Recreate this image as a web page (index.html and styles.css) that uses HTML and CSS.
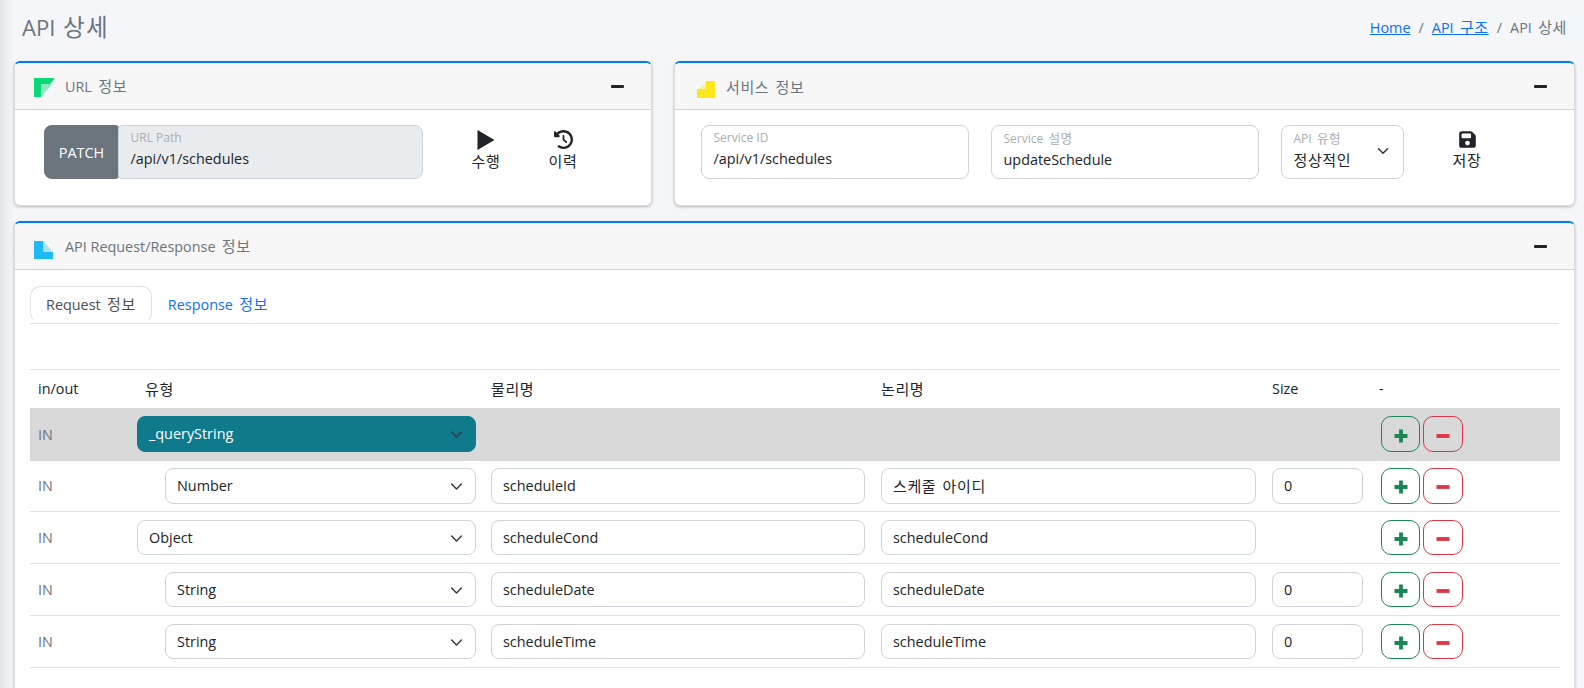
FILE: index.html
```html
<!DOCTYPE html>
<html lang="ko">
<head>
<meta charset="utf-8">
<title>API 상세</title>
<link rel="stylesheet" href="styles.css">
</head>
<body>
<div class="page">
  <header class="page-head">
    <h1 class="page-title">API<span class="ko"> 상세</span></h1>
    <nav class="crumbs"><a href="#">Home</a><span class="sep">/</span><a href="#">API<span class="ko"> 구조</span></a><span class="sep">/</span><span>API<span class="ko"> 상세</span></span></nav>
  </header>

  <div class="top-row">
    <section class="card card-url">
      <div class="card-head">
        <div class="card-title">
          <svg class="ico ico-url" width="20" height="19" viewBox="0 0 20 19"><path fill="#f3f9fc" d="M7 6h13v13H7z"/><path fill="#0bd977" d="M0 0h20v1.500L16 6H7v13H0z"/><path fill="#8fe9bf" d="M7 6h11.500L7 18.500z"/></svg>
          <span>URL<span class="ko"> 정보</span></span>
        </div>
        <span class="collapse"></span>
      </div>
      <div class="card-body body-url">
        <div class="method">PATCH</div>
        <div class="field field-ro field-path"><label>URL Path</label><div class="val">/api/v1/schedules</div></div>
        <div class="action act-run">
          <svg width="20" height="20" viewBox="0 0 20 20"><path fill="#212529" d="M1.500 0 18.500 10 1.500 20z"/></svg>
          <span class="ko">수행</span>
        </div>
        <div class="action act-hist">
          <svg width="19" height="19" viewBox="0 0 512 512"><path fill="#212529" d="M75 75 41 41C26 26 0 36.600 0 57.900V168c0 13.300 10.700 24 24 24h110.100c21.400 0 32.100-25.900 17-41l-30.800-30.800C155 85.500 203 64 256 64c106 0 192 86 192 192s-86 192-192 192c-40.800 0-78.600-12.700-109.700-34.400-14.500-10.100-34.400-6.600-44.600 7.900s-6.600 34.400 7.900 44.600C151.200 495 201.700 512 256 512c141.400 0 256-114.600 256-256S397.400 0 256 0C185.300 0 121.300 28.700 75 75zm181 53c-13.300 0-24 10.700-24 24v104c0 6.400 2.500 12.500 7 17l72 72c9.400 9.400 24.600 9.400 33.900 0s9.400-24.600 0-33.900l-65-65V152c0-13.300-10.700-24-24-24z"/></svg>
          <span class="ko">이력</span>
        </div>
      </div>
    </section>

    <section class="card card-svc">
      <div class="card-head">
        <div class="card-title">
          <svg class="ico ico-svc" width="18" height="17" viewBox="0 0 18 17"><path fill="#f3f9fc" d="M9 0v8H0z"/><path fill="#fbe71c" d="M9 0h9v17H0V8h9z"/><path fill="#fdf39a" d="M9 1v7H1.500z"/></svg>
          <span class="ko">서비스 정보</span>
        </div>
        <span class="collapse"></span>
      </div>
      <div class="card-body body-svc">
        <div class="field field-id"><label>Service ID</label><div class="val">/api/v1/schedules</div></div>
        <div class="field field-desc"><label>Service<span class="ko"> 설명</span></label><div class="val">updateSchedule</div></div>
        <div class="field field-kind"><label>API<span class="ko"> 유형</span></label><div class="val ko">정상적인</div>
          <svg class="chev-kind" width="12" height="12" viewBox="0 0 16 16"><path fill="none" stroke="#343a40" stroke-linecap="round" stroke-linejoin="round" stroke-width="2" d="m2 5 6 6 6-6"/></svg>
        </div>
        <div class="action act-save">
          <svg width="17" height="19" viewBox="0 0 448 512"><path fill="#212529" d="M64 32C28.700 32 0 60.700 0 96V416c0 35.300 28.700 64 64 64H384c35.300 0 64-28.700 64-64V173.300c0-17-6.700-33.300-18.700-45.300L352 50.700C340 38.700 323.700 32 306.700 32H64zm0 96c0-17.700 14.300-32 32-32H288c17.700 0 32 14.300 32 32v64c0 17.700-14.300 32-32 32H96c-17.700 0-32-14.300-32-32V128zM224 288a64 64 0 1 1 0 128 64 64 0 1 1 0-128z"/></svg>
          <span class="ko">저장</span>
        </div>
      </div>
    </section>
  </div>

  <section class="card card-api">
    <div class="card-head">
      <div class="card-title">
        <svg class="ico ico-api" width="19" height="18" viewBox="0 0 19 18"><path fill="#1fb9f5" d="M0 0h9.500v11H19v7H0z"/><path fill="#a9e2fa" d="M9.500 0 19 11H9.500z"/></svg>
        <span>API Request/Response<span class="ko"> 정보</span></span>
      </div>
      <span class="collapse"></span>
    </div>
    <div class="card-body body-api">
      <div class="tabs">
        <a class="tab tab-on">Request<span class="ko"> 정보</span></a>
        <a class="tab">Response<span class="ko"> 정보</span></a>
      </div>
      <table class="grid">
        <colgroup><col class="c1"><col class="c2"><col class="c3"><col class="c4"><col class="c5"><col class="c6"></colgroup>
        <thead>
          <tr><th>in/out</th><th class="th-type ko">유형</th><th class="ko">물리명</th><th class="ko">논리명</th><th>Size</th><th>-</th></tr>
        </thead>
        <tbody>
          <tr class="row-sel">
            <td class="io">IN</td>
            <td><div class="sel sel-on">_queryString<svg class="chev" width="13" height="13" viewBox="0 0 16 16"><path fill="none" stroke="#343a40" stroke-linecap="round" stroke-linejoin="round" stroke-width="1.800" d="m2 5 6 6 6-6"/></svg></div></td>
            <td></td><td></td><td></td>
            <td><div class="btns"><button class="btn btn-add"><svg width="14" height="14" viewBox="0 0 14 14"><path stroke="currentColor" stroke-width="3.800" d="M7 .5v13M.5 7h13"/></svg></button><button class="btn btn-del"><svg width="14" height="14" viewBox="0 0 14 14"><path stroke="currentColor" stroke-width="3.800" d="M.5 7h13"/></svg></button></div></td>
          </tr>
          <tr class="row-tight">
            <td class="io">IN</td>
            <td><div class="sel sel-child">Number<svg class="chev" width="13" height="13" viewBox="0 0 16 16"><path fill="none" stroke="#343a40" stroke-linecap="round" stroke-linejoin="round" stroke-width="1.800" d="m2 5 6 6 6-6"/></svg></div></td>
            <td><div class="inp">scheduleId</div></td>
            <td><div class="inp"><span class="ko">스케줄 아이디</span></div></td>
            <td><div class="inp">0</div></td>
            <td><div class="btns"><button class="btn btn-add"><svg width="14" height="14" viewBox="0 0 14 14"><path stroke="currentColor" stroke-width="3.800" d="M7 .5v13M.5 7h13"/></svg></button><button class="btn btn-del"><svg width="14" height="14" viewBox="0 0 14 14"><path stroke="currentColor" stroke-width="3.800" d="M.5 7h13"/></svg></button></div></td>
          </tr>
          <tr>
            <td class="io">IN</td>
            <td><div class="sel">Object<svg class="chev" width="13" height="13" viewBox="0 0 16 16"><path fill="none" stroke="#343a40" stroke-linecap="round" stroke-linejoin="round" stroke-width="1.800" d="m2 5 6 6 6-6"/></svg></div></td>
            <td><div class="inp">scheduleCond</div></td>
            <td><div class="inp">scheduleCond</div></td>
            <td></td>
            <td><div class="btns"><button class="btn btn-add"><svg width="14" height="14" viewBox="0 0 14 14"><path stroke="currentColor" stroke-width="3.800" d="M7 .5v13M.5 7h13"/></svg></button><button class="btn btn-del"><svg width="14" height="14" viewBox="0 0 14 14"><path stroke="currentColor" stroke-width="3.800" d="M.5 7h13"/></svg></button></div></td>
          </tr>
          <tr>
            <td class="io">IN</td>
            <td><div class="sel sel-child">String<svg class="chev" width="13" height="13" viewBox="0 0 16 16"><path fill="none" stroke="#343a40" stroke-linecap="round" stroke-linejoin="round" stroke-width="1.800" d="m2 5 6 6 6-6"/></svg></div></td>
            <td><div class="inp">scheduleDate</div></td>
            <td><div class="inp">scheduleDate</div></td>
            <td><div class="inp">0</div></td>
            <td><div class="btns"><button class="btn btn-add"><svg width="14" height="14" viewBox="0 0 14 14"><path stroke="currentColor" stroke-width="3.800" d="M7 .5v13M.5 7h13"/></svg></button><button class="btn btn-del"><svg width="14" height="14" viewBox="0 0 14 14"><path stroke="currentColor" stroke-width="3.800" d="M.5 7h13"/></svg></button></div></td>
          </tr>
          <tr>
            <td class="io">IN</td>
            <td><div class="sel sel-child">String<svg class="chev" width="13" height="13" viewBox="0 0 16 16"><path fill="none" stroke="#343a40" stroke-linecap="round" stroke-linejoin="round" stroke-width="1.800" d="m2 5 6 6 6-6"/></svg></div></td>
            <td><div class="inp">scheduleTime</div></td>
            <td><div class="inp">scheduleTime</div></td>
            <td><div class="inp">0</div></td>
            <td><div class="btns"><button class="btn btn-add"><svg width="14" height="14" viewBox="0 0 14 14"><path stroke="currentColor" stroke-width="3.800" d="M7 .5v13M.5 7h13"/></svg></button><button class="btn btn-del"><svg width="14" height="14" viewBox="0 0 14 14"><path stroke="currentColor" stroke-width="3.800" d="M.5 7h13"/></svg></button></div></td>
          </tr>
        </tbody>
      </table>
    </div>
  </section>
</div>
</body>
</html>
```
FILE: styles.css
```css
* { box-sizing: border-box; }
html, body { height: 100%; }
body {
  margin: 0;
  overflow: hidden;
  background: linear-gradient(90deg, #e2e4e8 0, #eef0f4 8px, #f4f6f9 16px);
  color: #212529;
  font: 14.4px/21px "Open Sans", "Noto Sans CJK KR", sans-serif;
}
.ko {
  font-family: "Noto Sans CJK KR", sans-serif;
  font-size: 1.045em;
  letter-spacing: .04em;
  word-spacing: .1em;
}
.page {
  padding: 0 9px 0 14px;
  height: 688px;
  overflow: hidden;
}
.page-head {
  display: flex;
  justify-content: space-between;
  align-items: flex-start;
  height: 61px;
  padding: 12px 8px 0 8px;
}
.page-title {
  margin: 0;
  font-size: 22px;
  line-height: 28px;
  font-weight: 400;
  color: #6c757d;
}
.page-title .ko { font-size: 1.07em; letter-spacing: .05em; word-spacing: 0; }
.crumbs { margin-top: 4px; color: #6c757d; }
.crumbs a { color: #0d6efd; text-decoration: underline; }
.sep { padding: 0 8px; }
.top-row { display: flex; gap: 22px; margin-bottom: 15px; }
.card {
  background: #fff;
  border: 1px solid #dcdcdc;
  border-top: 2px solid #007bff;
  border-radius: 6px;
  box-shadow: 0 1px 3px rgba(0,0,0,.25);
}
.card-url { width: 638px; height: 145px; }
.card-svc { flex: 1; height: 145px; }
.card-api { height: 640px; }
.card-head {
  display: flex;
  justify-content: space-between;
  align-items: center;
  height: 47px;
  padding: 0 27px 0 19px;
  background: #f7f7f7;
  border-bottom: 1px solid #d0d0d0;
  border-radius: 5px 5px 0 0;
}
.card-title { display: flex; align-items: center; gap: 11px; color: #6c757d; }
.ico-url { margin-top: 2px; }
.ico-svc { margin-top: 6px; margin-left: 3px; }
.ico-api { margin-top: 7px; margin-right: 1px; }
.collapse { width: 13px; height: 3px; background: #212529; border-radius: 1px; }
.card-body { display: flex; }
.body-url { padding: 15px 0 0 29px; }
.body-svc { padding: 15px 0 0 26px; }
.body-api { display: block; padding: 16px 15px 0; }
.method {
  width: 75px;
  height: 54px;
  display: flex;
  align-items: center;
  justify-content: center;
  background: #6c757d;
  color: #fff;
  border-radius: 8px 4px 4px 8px;
}
.field {
  position: relative;
  height: 54px;
  padding: 3px 11.5px 0;
  border: 1px solid #ced4da;
  border-radius: 8px;
  background: #fff;
}
.field label { display: block; font-size: 12px; line-height: 18px; color: #a9adb1; }
.val { line-height: 25px; margin-top: -1px; }
.field-ro { background: #e9ecef; border-radius: 4px 8px 8px 4px; }
.field-path { width: 305px; margin-left: -1px; }
.field-id { width: 268px; }
.field-desc { width: 268px; margin-left: 22px; }
.field-kind { width: 123px; margin-left: 22px; }
.chev-kind { position: absolute; right: 14px; top: 19px; }
.action {
  display: flex;
  flex-direction: column;
  align-items: center;
  width: 48px;
  padding-top: 5px;
  color: #212529;
}
.action svg { display: block; }
.action span { line-height: 21px; }
.act-hist svg { margin-bottom: 1px; }
.act-run { margin-left: 39px; }
.act-hist { margin-left: 29px; }
.act-save { margin-left: 39px; }
.tabs { display: flex; height: 38px; border-bottom: 1px solid #dee2e6; }
.tab {
  height: 37px;
  padding: 6px 15px;
  color: #0d6efd;
  border: 1px solid transparent;
  border-radius: 10px;
}
.tab-on { color: #495057; background: #fff; border-color: #dee2e6; border-bottom-color: #fff; }
.grid {
  width: 1530px;
  margin-top: 45px;
  table-layout: fixed;
  border-collapse: collapse;
  border-top: 1px solid #dee2e6;
}
.c1 { width: 99px; }
.c2 { width: 354px; }
.c3 { width: 390px; }
.c4 { width: 391px; }
.c5 { width: 107px; }
.grid th { height: 38px; padding: 0 8px; text-align: left; font-weight: 400; }
.grid .th-type { padding-left: 16px; }
.grid td { height: 52px; padding: 0 8px; border-bottom: 1px solid #dee2e6; }
.grid .row-tight td { height: 51px; }
.grid .row-sel td { height: 53px; background: #d9d9d9; border-bottom: 0; }
.grid td.io { color: #6c757d; }
.sel, .inp {
  position: relative;
  height: 35.5px;
  padding: 0 11px;
  line-height: 34px;
  background: #fff;
  border: 1px solid #ced4da;
  border-radius: 8px;
}
.sel { margin-right: -1px; }
.sel-child { margin-left: 28px; }
.sel-on { background: #0f7a8c; border-color: #0f7a8c; color: #fff; }
.chev { position: absolute; right: 12px; top: 11px; }
.btns { display: flex; gap: 3px; margin-left: 2px; }
.btn {
  display: flex;
  align-items: center;
  justify-content: center;
  width: 39px;
  height: 35.5px;
  padding: 3px 0 0;
  background: transparent;
  border: 1px solid;
  border-radius: 10px;
}
.btn-add { color: #198754; border-color: #198754; }
.btn-del { color: #dc3545; border-color: #dc3545; width: 40px; }
```
